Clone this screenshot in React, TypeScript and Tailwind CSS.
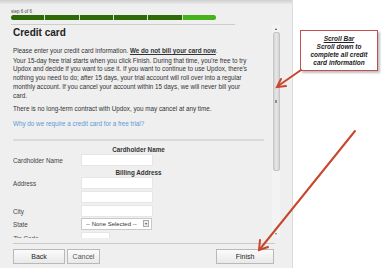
import React from 'react';

const steps = [0, 1, 2, 3, 4, 5];

const Field = ({ label, children }: { label?: string; children: React.ReactNode }) => (
  <div className="flex items-start h-[12px]">
    <div className="w-[68px] h-[12px] text-[6.3px] leading-[14px] text-[#444] whitespace-nowrap">{label}</div>
    {children}
  </div>
);

const TextBox = ({ w = 'w-[72px]' }: { w?: string }) => (
  <div className={`${w} h-[12px] bg-white border border-[#e6e6e6]`} />
);

const Btn = ({ label, w, dark }: { label: string; w: string; dark?: boolean }) => (
  <button
    className={`${w} h-[15px] border border-[#b9b9b9] bg-gradient-to-b from-[#fbfbfb] to-[#e9e9e9] text-[7px] leading-[13px] ${dark ? 'text-[#222]' : 'text-[#555]'}`}
  >
    {label}
  </button>
);

export default function App() {
  return (
    <div
      className="relative w-[387px] h-[268px] overflow-hidden bg-white flex"
      style={{ fontFamily: '"Liberation Sans", Arial, sans-serif' }}
    >
      {/* Panel */}
      <div className="w-[293px] h-[268px] bg-[#efefef] border-r border-[#dcdcdc] flex flex-col">
        <div className="h-[4px] bg-gradient-to-b from-[#cfcfcf] to-[#e9e9e9]" />

        {/* Header: step + progress */}
        <div className="pl-[11px]">
          <div className="mt-[5px] text-[4.5px] leading-[6px] text-[#444]">step 6 of 6</div>
          <div className="w-[205px] h-[5px] rounded-full overflow-hidden flex gap-[1px] bg-[#d9e6cf]">
            {steps.map((s) => (
              <div key={s} className={`flex-1 ${s === 5 ? 'bg-[#46b21c]' : 'bg-[#2e6a08]'}`} />
            ))}
          </div>
          <div className="mt-[4px] w-[224px] h-px bg-[#cdcdcd]" />
        </div>

        {/* Scroll region */}
        <div className="flex h-[213px]">
          <div className="w-[272px] h-[213px] overflow-hidden pl-[13px] pr-[8px] text-[#333]">
            <h1 className="mt-[2px] text-[10px] leading-[12px] font-bold text-[#222]">Credit card</h1>

            <p className="mt-[8px] text-[6.3px] leading-[8.7px] whitespace-nowrap">
              Please enter your credit card information.{' '}
              <span className="font-bold underline">We do not bill your card now</span>.
            </p>

            <p className="mt-[1px] text-[6.3px] leading-[8.7px] whitespace-nowrap">
              Your 15-day free trial starts when you click Finish. During that time, you're free to try
              <br />
              Updox and decide if you want to use it. If you want to continue to use Updox, there's
              <br />
              nothing you need to do; after 15 days, your trial account will roll over into a regular
              <br />
              monthly account. If you cancel your account within 15 days, we will never bill your
              <br />
              card.
            </p>

            <p className="mt-[5px] text-[6.3px] leading-[8.7px] whitespace-nowrap">
              There is no long-term contract with Updox, you may cancel at any time.
            </p>

            <p className="mt-[6px] text-[6.3px] leading-[8.7px] text-[#5a9ad6] whitespace-nowrap">
              Why do we require a credit card for a free trial?
            </p>

            <div className="mt-[10px] w-[251px] h-[2px] bg-[#dadada]" />

            <div className="w-[251px]">
              <div className="mt-[5px] text-center text-[6.3px] leading-[8px] font-bold text-[#333]">
                Cardholder Name
              </div>
              <Field label="Cardholder Name">
                <TextBox />
              </Field>

              <div className="mt-[2px] text-center text-[6.3px] leading-[9px] font-bold text-[#333]">
                Billing Address
              </div>
              <div className="flex flex-col gap-[2px]">
                <Field label="Address">
                  <TextBox />
                </Field>
                <Field>
                  <TextBox />
                </Field>
                <Field label="City">
                  <TextBox />
                </Field>
              </div>
              <div className="mt-[1px]">
                <Field label="State">
                  <div className="w-[71px] h-[12px] bg-white border border-[#c9c9c9] flex items-center">
                    <span className="flex-1 pl-[4px] text-[6px] leading-[10px] text-[#333] whitespace-nowrap">
                      -- None Selected --
                    </span>
                    <span className="w-[6px] h-[7px] mr-[2px] border border-[#aaa] bg-[#eee] flex items-center justify-center text-[4px] leading-none text-[#555]">
                      ▾
                    </span>
                  </div>
                </Field>
              </div>
              <div className="mt-[2px]">
                <Field label="Zip Code">
                  <TextBox w="w-[29px]" />
                </Field>
              </div>
            </div>
          </div>

          {/* Scrollbar */}
          <div className="w-[8px] h-[213px] flex flex-col items-center bg-[#f3f3f3]">
            <div className="mt-[3px] w-0 h-0 border-l-[1.5px] border-r-[1.5px] border-b-[2px] border-l-transparent border-r-transparent border-b-[#444]" />
            <div className="mt-[2px] w-[7px] h-[139px] rounded-[2px] border border-[#c4c4c4] bg-gradient-to-r from-[#d6d6d6] via-[#e6e6e6] to-[#d3d3d3] flex items-center justify-center">
              <div className="w-[2px] h-[3px] bg-[#8f8f8f]" />
            </div>
            <div className="flex-1" />
            <div className="mb-[3px] w-0 h-0 border-l-[1.5px] border-r-[1.5px] border-t-[2px] border-l-transparent border-r-transparent border-t-[#777]" />
          </div>
        </div>

        {/* Footer */}
        <div className="pl-[13px]">
          <div className="mt-[5px] w-[262px] h-px bg-[#c9c9c9]" />
          <div className="mt-[5px] w-[261px] flex items-center">
            <Btn label="Back" w="w-[52px]" dark />
            <div className="w-[2px]" />
            <Btn label="Cancel" w="w-[33px]" />
            <div className="flex-1" />
            <Btn label="Finish" w="w-[58px]" dark />
          </div>
        </div>
      </div>

      {/* Callout */}
      <div className="absolute left-[300px] top-[30px] w-[78px] h-[41px] bg-white border border-[#c0504d] shadow-[2px_2px_2px_rgba(0,0,0,0.25)] flex flex-col items-center justify-center text-[6.5px] leading-[8px] font-bold italic text-[#222]">
        <span className="underline">Scroll Bar</span>
        <span>Scroll down to</span>
        <span>complete all credit</span>
        <span>card information</span>
      </div>

      {/* Arrows */}
      <svg className="absolute left-0 top-0 pointer-events-none" width="387" height="268" viewBox="0 0 387 268">
        <g stroke="#c8462c" strokeWidth="2" strokeLinecap="round" fill="none">
          <line x1="301" y1="70" x2="278" y2="86" />
          <polyline points="281,79 277,87 286,86" />
          <line x1="355" y1="131" x2="260" y2="249" />
          <polyline points="260,240 259,250 268,247" />
        </g>
      </svg>
    </div>
  );
}
